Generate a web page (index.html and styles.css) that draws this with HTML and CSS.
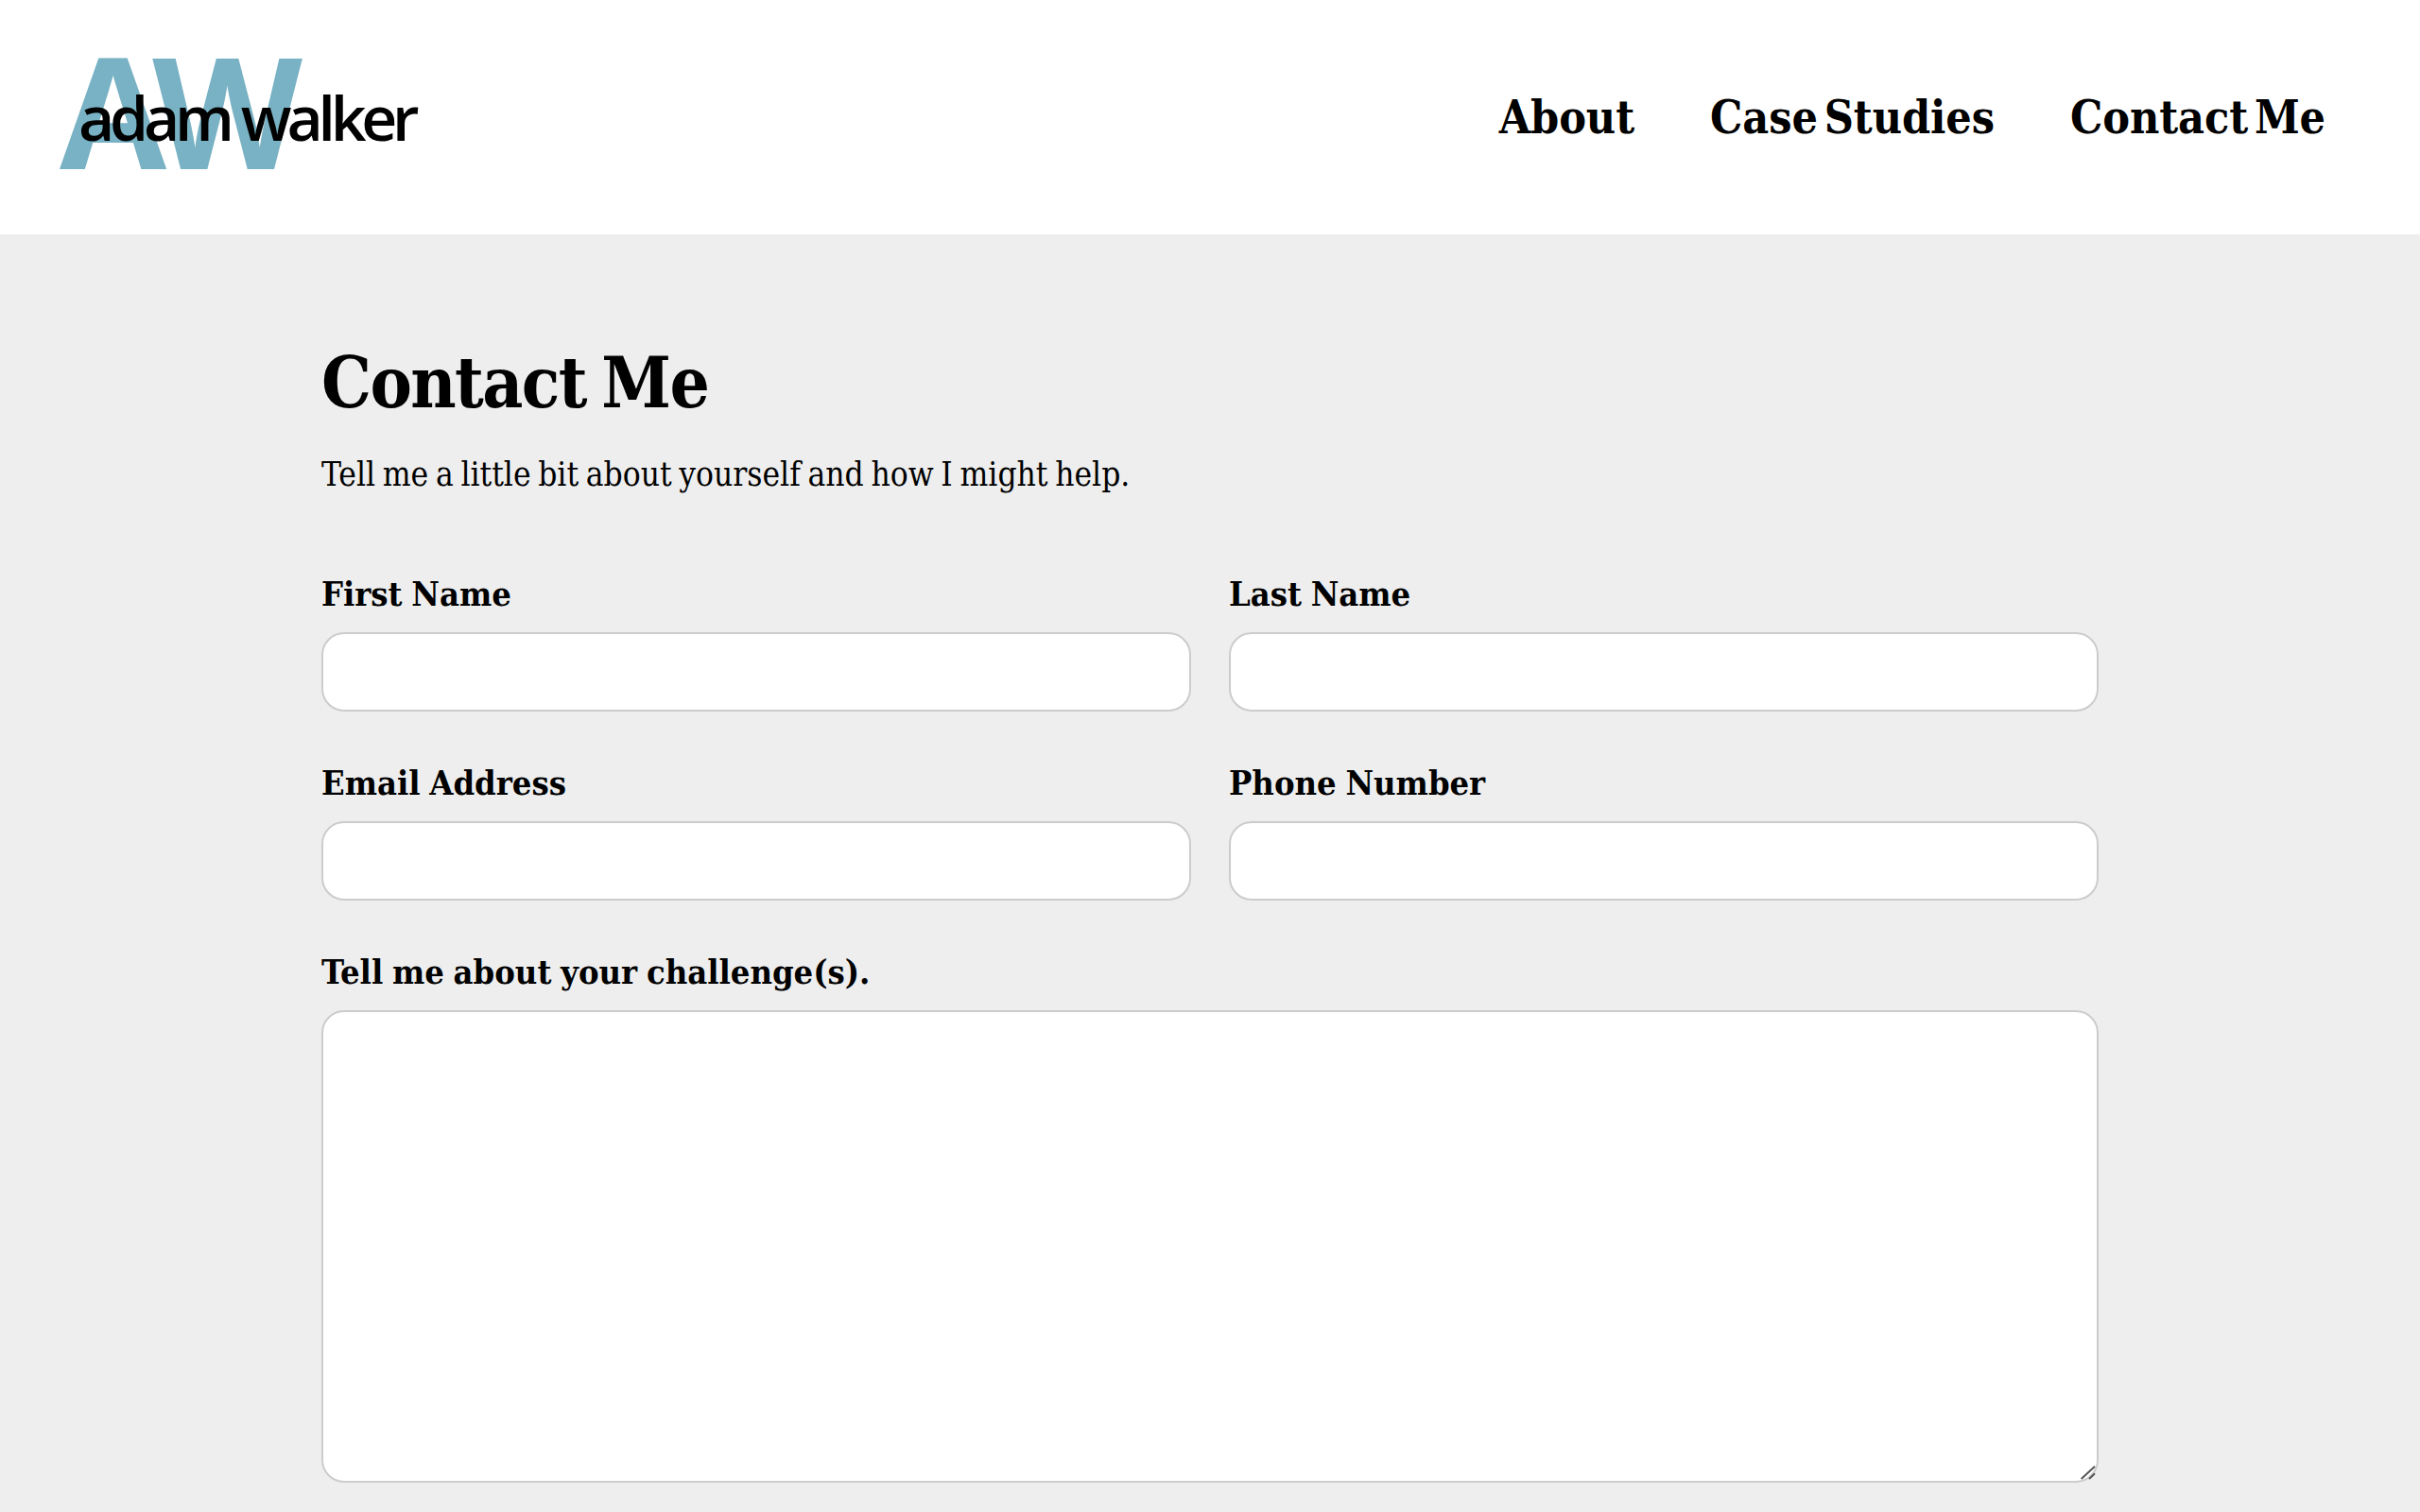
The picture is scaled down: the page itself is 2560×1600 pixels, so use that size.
FILE: index.html
```html
<!DOCTYPE html>
<html lang="en">
<head>
<meta charset="utf-8">
<title>Contact Me - Adam Walker</title>
<link rel="stylesheet" href="styles.css">
</head>
<body>
<header class="site-header">
  <a class="logo" href="#">
    <span class="logo-mark">AW</span>
    <span class="logo-name">adam walker</span>
  </a>
  <nav class="site-nav">
    <a href="#">About</a>
    <a href="#">Case Studies</a>
    <a href="#">Contact Me</a>
  </nav>
</header>
<main class="content">
  <h1 class="title">Contact Me</h1>
  <p class="intro">Tell me a little bit about yourself and how I might help.</p>
  <form class="contact-form">
    <div class="field">
      <label for="first">First Name</label>
      <input id="first" type="text">
    </div>
    <div class="field">
      <label for="last">Last Name</label>
      <input id="last" type="text">
    </div>
    <div class="field">
      <label for="email">Email Address</label>
      <input id="email" type="text">
    </div>
    <div class="field">
      <label for="phone">Phone Number</label>
      <input id="phone" type="text">
    </div>
    <div class="field field-wide">
      <label for="challenge">Tell me about your challenge(s).</label>
      <div class="textarea-wrap">
        <textarea id="challenge"></textarea>
        <svg class="grip" width="20" height="20" viewBox="0 0 20 20" aria-hidden="true">
          <path d="M3.7 18 18 4.7M12 18l6-5.7" fill="none" stroke="#555" stroke-width="2"/>
        </svg>
      </div>
    </div>
  </form>
</main>
</body>
</html>
```
FILE: styles.css
```css
* { box-sizing: border-box; }
html, body { margin: 0; padding: 0; height: 100%; overflow: hidden; }
body {
  background: #eeeeee;
  color: #000;
  font-family: "DejaVu Serif Condensed", "DejaVu Serif", serif;
}
a { color: inherit; text-decoration: none; }

.site-header {
  height: 248px;
  background: #fff;
  display: flex;
  align-items: center;
  justify-content: space-between;
  padding: 0 100px 0 63px;
}
.logo { position: relative; display: block; width: 378px; height: 118px; }
.logo-mark {
  position: absolute;
  left: 0;
  top: -8px;
  font: 700 164px/118px "Open Sans", sans-serif;
  letter-spacing: -15px;
  color: #78b2c4;
  white-space: nowrap;
}
.logo-name {
  position: absolute;
  left: 20px;
  top: 28px;
  font: 600 66px/60px "Open Sans", sans-serif;
  letter-spacing: -5.2px;
  color: #000;
  white-space: nowrap;
}
.site-nav { display: flex; gap: 80px; font-size: 48px; font-weight: 700; line-height: 60px; letter-spacing: -0.1px; word-spacing: -8px; }

.content { padding: 111px 340px 0; }
.title { margin: 0 0 23px; font-size: 74px; font-weight: 700; line-height: 92px; letter-spacing: -1.6px; word-spacing: -5px; }
.intro { margin: 0 0 75px; font-size: 35px; line-height: 56px; word-spacing: -2.3px; }
.contact-form { display: grid; grid-template-columns: 1fr 1fr; column-gap: 40px; row-gap: 52px; }
.field { display: flex; flex-direction: column; }
.field-wide { grid-column: 1 / -1; }
.field label { font-size: 36px; font-weight: 700; line-height: 46px; margin-bottom: 18px; letter-spacing: 0; word-spacing: -1.5px; }
.field input, .field textarea {
  display: block;
  width: 100%;
  background: #fff;
  border: 2px solid #ccc;
  border-radius: 24px;
  outline: none;
  padding: 0 24px;
  font: inherit;
}
.field input { height: 84px; }
.field textarea { height: 500px; resize: none; }
.textarea-wrap { position: relative; }
.grip { position: absolute; right: 2px; bottom: 2px; }
```
